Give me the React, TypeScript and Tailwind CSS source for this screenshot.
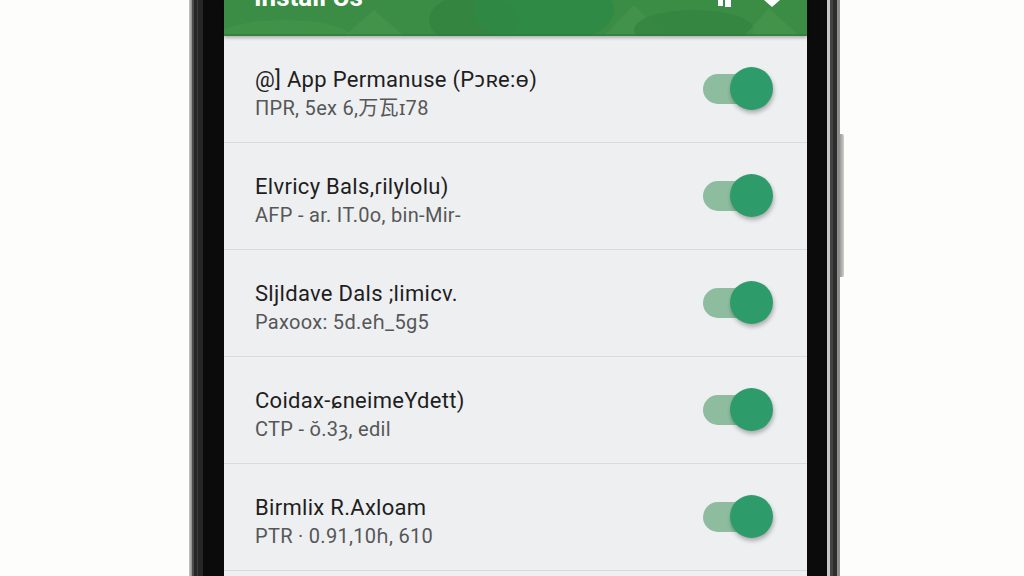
import React from "react";

const rows = [
  { t: "@] App Permanuse (Pɔʀe:ɵ)", s: "ΠPR, 5ex 6,万瓦ɪ78" },
  { t: "Elvricy Bals,ɾilylolu)", s: "AFP - ar. ΙΤ.0o, bin-Mir-" },
  { t: "Sljldave Dals ;limicv.", s: "Paxoox: 5d.eɦ_5g5" },
  { t: "Coidax-ɕneimeYdett)", s: "CTP - ŏ.3ȝ, edil" },
  { t: "Birmlix R.Axloam", s: "PTR · 0.91,10ɦ, 610" },
];

function Toggle() {
  return (
    <div className="relative w-[72px] h-[44px] flex items-center">
      <div className="w-[58px] h-[30px] rounded-full bg-[#8dbc9f]" />
      <div className="absolute left-[27px] top-[0px] w-[43px] h-[43px] rounded-full bg-[#2e9c6a] shadow-[1px_3px_4px_rgba(0,0,0,0.28)]" />
    </div>
  );
}

export default function App() {
  return (
    <div
      className="w-[1024px] h-[576px] bg-[#fdfdfb] flex overflow-hidden"
      style={{ fontFamily: 'Roboto, "Noto Sans", "Noto Sans CJK SC", sans-serif' }}
    >
      <div className="w-[189px]" />
      {/* left frame */}
      <div className="w-[3px] bg-gradient-to-r from-[#c9c9c6] to-[#8b8b88]" />
      <div className="w-[11px] bg-[#262626] flex">
        <div className="w-[2px] bg-[#4a4a48]" />
        <div className="w-[3px]" />
        <div className="w-[1px] bg-[#3c3c3c]" />
      </div>
      <div className="w-[21px] bg-[#0b0b0b]" />
      {/* screen */}
      <div className="w-[583px] h-full bg-[#eeeff1] flex flex-col">
        <div className="relative h-[36px] bg-[#3b8c45] overflow-hidden shadow-[0_2px_3px_rgba(0,0,0,0.25)] z-10 shrink-0">
          <svg className="absolute inset-0" width="583" height="36" viewBox="0 0 583 36">
            <ellipse cx="60" cy="40" rx="70" ry="20" fill="#44944c" opacity="0.7" />
            <ellipse cx="250" cy="20" rx="45" ry="26" fill="#348540" />
            <ellipse cx="320" cy="10" rx="70" ry="35" fill="#2f8a45" opacity="0.9" />
            <path d="M120 36 L150 10 L180 36 Z" fill="#4b9a51" opacity="0.5" />
            <path d="M380 36 L410 5 L440 36 Z" fill="#4b9a51" opacity="0.45" />
            <ellipse cx="470" cy="30" rx="60" ry="20" fill="#348540" opacity="0.8" />
            <path d="M520 36 L545 8 L575 36 Z" fill="#4f9e55" opacity="0.4" />
            <rect x="0" y="34" width="583" height="2" fill="#2f7a3a" opacity="0.6" />
          </svg>
          <div className="relative pl-[30px] -mt-[16px] text-[26px] leading-[26px] font-bold text-white">
            Install Us
          </div>
          <svg className="absolute left-[492px] top-0" width="24" height="10" viewBox="0 0 24 10">
            <rect x="2" y="0" width="5" height="6" fill="#fff" />
            <rect x="9" y="0" width="6" height="7" fill="#fff" />
          </svg>
          <svg className="absolute left-[538px] top-0" width="20" height="10" viewBox="0 0 20 10">
            <path d="M2 0 L18 0 L10 7 Z" fill="#fff" />
          </svg>
        </div>
        {rows.map((r, i) => (
          <div
            key={i}
            className="h-[107px] shrink-0 border-b border-[#d8dadc] flex items-center pl-[31px] pr-[32px]"
          >
            <div className="flex-1 mt-[9px]">
              <div className="text-[22px] leading-[28px] tracking-[0.3px] text-[#1e1e1e]">{r.t}</div>
              <div className="text-[20px] leading-[28px] tracking-[0.3px] text-[#555758]">{r.s}</div>
            </div>
            <Toggle />
          </div>
        ))}
      </div>
      {/* right frame */}
      <div className="w-[20px] bg-[#0b0b0b]" />
      <div className="w-[3px] bg-[#c8c8c6]" />
      <div className="w-[10px] bg-[#2e2e2e] flex">
        <div className="w-[3px] bg-[#444]" />
        <div className="flex-1" />
        <div className="w-[3px] bg-[#8e8e8c]" />
      </div>
      <div className="w-[4px] flex flex-col">
        <div className="h-[134px]" />
        <div className="h-[143px] bg-gradient-to-r from-[#9a9a98] to-[#cfcfcc] rounded-r-[2px]" />
      </div>
    </div>
  );
}
